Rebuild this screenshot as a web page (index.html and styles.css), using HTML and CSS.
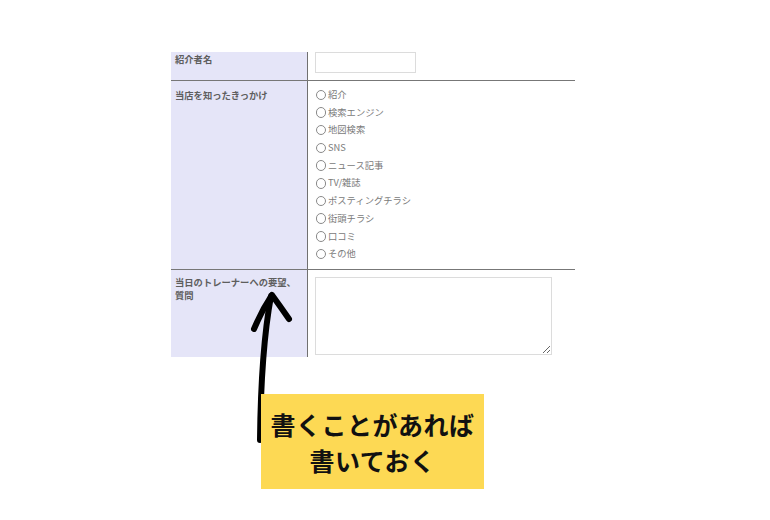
FILE: index.html
```html
<!DOCTYPE html>
<html lang="ja">
<head>
<meta charset="utf-8">
<link rel="stylesheet" href="styles.css">
</head>
<body>
<div class="page">
  <table class="form">
    <tr class="row-name">
      <th class="label">紹介者名</th>
      <td class="value"><input class="text-input" type="text"></td>
    </tr>
    <tr class="row-source">
      <th class="label">当店を知ったきっかけ</th>
      <td class="value">
        <ul class="radios">
          <li><label><input type="radio" name="src" class="radio">紹介</label></li>
          <li><label><input type="radio" name="src" class="radio">検索エンジン</label></li>
          <li><label><input type="radio" name="src" class="radio">地図検索</label></li>
          <li><label><input type="radio" name="src" class="radio">SNS</label></li>
          <li><label><input type="radio" name="src" class="radio">ニュース記事</label></li>
          <li><label><input type="radio" name="src" class="radio">TV/雑誌</label></li>
          <li><label><input type="radio" name="src" class="radio">ポスティングチラシ</label></li>
          <li><label><input type="radio" name="src" class="radio">街頭チラシ</label></li>
          <li><label><input type="radio" name="src" class="radio">口コミ</label></li>
          <li><label><input type="radio" name="src" class="radio">その他</label></li>
        </ul>
      </td>
    </tr>
    <tr class="row-request">
      <th class="label">当日のトレーナーへの要望、<br>質問</th>
      <td class="value"><textarea class="text-area"></textarea></td>
    </tr>
  </table>
  <div class="note">書くことがあれば<br>書いておく</div>
</div>
<svg class="arrow" width="770" height="520" viewBox="0 0 770 520" aria-hidden="true">
  <path d="M260 440 Q261 350 271 296" />
  <path d="M254 329 Q262 310 272 295 Q280 306 289 319" />
</svg>
</body>
</html>
```

FILE: styles.css
```css
html, body {
  margin: 0;
  padding: 0;
  background: #ffffff;
}

body {
  position: relative;
  width: 770px;
  height: 520px;
  overflow: hidden;
  font-family: "Noto Sans CJK JP", "Noto Sans", sans-serif;
}

.page {
  padding: 52px 0 0 171px;
}

.form {
  border-collapse: collapse;
  width: 404px;
}

.label {
  width: 132px;
  background: #e5e5f8;
  border-right: 1px solid #707070;
  text-align: left;
  vertical-align: top;
  font-size: 9.3px;
  font-weight: 700;
  color: #5e5e5e;
  line-height: 14px;
  padding: 0 0 0 4px;
}

.value {
  vertical-align: top;
  padding: 0 0 0 7px;
}

.row-name td,
.row-name th,
.row-source td,
.row-source th {
  border-bottom: 1px solid #777777;
}

.row-name .value {
  padding-bottom: 7px;
}

.row-source .label {
  padding-top: 7px;
}

.row-source .value {
  padding-top: 5px;
  padding-bottom: 6px;
}

.row-request .label {
  padding-top: 6px;
  line-height: 13.5px;
  height: 81px;
}

.row-request .value {
  padding-top: 7px;
  padding-bottom: 2px;
}

.text-input {
  display: block;
  box-sizing: border-box;
  width: 101px;
  height: 21px;
  margin: 0;
  border: 1px solid #dcdcdc;
  background: #fff;
  padding: 2px 4px;
}

.text-area {
  display: block;
  box-sizing: border-box;
  width: 237px;
  height: 78px;
  margin: 0;
  border: 1px solid #dcdcdc;
  background: #fff;
  padding: 2px 4px;
}

.radios {
  list-style: none;
  margin: 0;
  padding: 0;
}

.radios li {
  height: 17.7px;
  line-height: 17.7px;
  font-size: 9.3px;
  color: #7a7a7a;
}

.radios label {
  display: flex;
  align-items: center;
  gap: 2px;
  height: 17.7px;
}

.radio {
  appearance: none;
  -webkit-appearance: none;
  box-sizing: border-box;
  width: 10.5px;
  height: 10.5px;
  margin: 0 0 0 0.5px;
  border: 1px solid #8a8a8a;
  border-radius: 50%;
  background: #fff;
  flex: none;
}

.note {
  position: relative;
  z-index: 2;
  box-sizing: border-box;
  width: 223px;
  height: 95px;
  margin: 37px 0 0 90px;
  padding-top: 12px;
  background: #fdd954;
  color: #111111;
  font-size: 25px;
  font-weight: 700;
  line-height: 36px;
  text-align: center;
  letter-spacing: 0.5px;
}

.arrow {
  position: absolute;
  left: 0;
  top: 0;
  z-index: 1;
  pointer-events: none;
}

.arrow path {
  fill: none;
  stroke: #000000;
  stroke-width: 6;
  stroke-linecap: round;
  stroke-linejoin: round;
}
```
